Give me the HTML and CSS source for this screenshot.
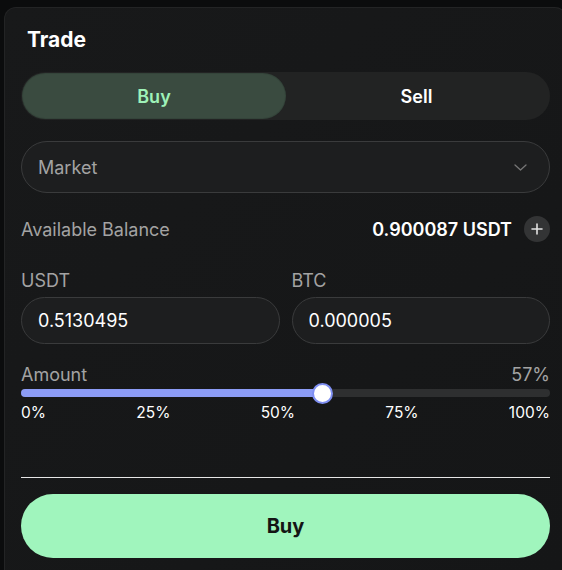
FILE: index.html
```html
<!DOCTYPE html>
<html lang="en">
<head>
  <meta charset="UTF-8">
  <title>Trade</title>
  <link rel="stylesheet" href="styles.css">
</head>
<body>
  <div class="card">
    <h2 class="title">Trade</h2>

    <div class="side-toggle">
      <button class="side active">Buy</button>
      <button class="side">Sell</button>
    </div>

    <div class="order-type">
      <span>Market</span>
      <svg class="chevron" width="13" height="7" viewBox="0 0 13 7"><path d="M1 1l5.5 5 5.5-5" fill="none" stroke="#767676" stroke-width="1.3" stroke-linecap="round" stroke-linejoin="round"/></svg>
    </div>

    <div class="balance">
      <span class="muted">Available Balance</span>
      <div class="balance-right">
        <span class="balance-value">0.900087 USDT</span>
        <span class="plus">
          <svg width="12" height="12" viewBox="0 0 12 12"><path d="M6 1v10M1 6h10" stroke="#e2e2e2" stroke-width="1.6" stroke-linecap="round"/></svg>
        </span>
      </div>
    </div>

    <div class="fields">
      <label class="field">
        <span class="muted">USDT</span>
        <input type="text" value="0.5130495">
      </label>
      <label class="field">
        <span class="muted">BTC</span>
        <input type="text" value="0.000005">
      </label>
    </div>

    <div class="amount-head">
      <span class="muted">Amount</span>
      <span class="muted">57%</span>
    </div>
    <div class="track">
      <div class="fill" style="width: 57%"></div>
      <div class="thumb" style="left: 57%"></div>
    </div>
    <div class="marks">
      <span>0%</span>
      <span>25%</span>
      <span>50%</span>
      <span>75%</span>
      <span>100%</span>
    </div>

    <hr class="divider">

    <button class="submit">Buy</button>
  </div>
</body>
</html>
```

FILE: styles.css
```css
* {
  box-sizing: border-box;
}

html,
body {
  height: 570px;
  overflow: hidden;
}

body {
  margin: 0;
  background: #0b0c0d;
  font-family: Inter, "Noto Sans", sans-serif;
  color: #fff;
}

.card {
  margin: 7px 0 0 4px;
  width: 563px;
  height: 563px;
  padding: 20px 16px 16px;
  background: linear-gradient(135deg, #18191a, #151617);
  border: 1px solid #232425;
  border-bottom: 0;
  border-radius: 12px 12px 0 0;
}

.title {
  margin: 0;
  padding-left: 6px;
  font-size: 21px;
  line-height: 24px;
  font-weight: 700;
}

.side-toggle {
  margin-top: 20px;
  display: flex;
  height: 48px;
  padding: 2px;
  background: #222323;
  border-radius: 24px;
}

.side {
  flex: 1;
  border: 0;
  background: transparent;
  color: #fff;
  font-family: inherit;
  font-size: 18px;
  font-weight: 600;
  border-radius: 22px;
  padding: 0;
}

.side.active {
  flex: 0 0 262px;
  background: #3a4b40;
  color: #9ef2b8;
  box-shadow: 0 0 0 1px #34443a;
}

.order-type {
  margin-top: 21px;
  height: 52px;
  display: flex;
  align-items: center;
  justify-content: space-between;
  padding: 0 22px 0 16px;
  border: 1px solid #3a3b3c;
  border-radius: 26px;
  background: #1d1e1f;
  color: #a3a3a3;
  font-size: 18px;
}

.muted {
  color: #a3a3a3;
}

.balance {
  margin-top: 23px;
  height: 26px;
  display: flex;
  align-items: center;
  justify-content: space-between;
  font-size: 18px;
}

.balance-right {
  display: flex;
  align-items: center;
  gap: 12px;
}

.balance-value {
  font-weight: 600;
}

.plus {
  width: 26px;
  height: 26px;
  border-radius: 50%;
  background: #333435;
  display: flex;
  align-items: center;
  justify-content: center;
}

.fields {
  margin-top: 29px;
  display: flex;
  gap: 12px;
}

.field {
  flex: 1;
  display: flex;
  flex-direction: column;
  gap: 6px;
  font-size: 18px;
  line-height: 20px;
}

.field input {
  height: 47px;
  width: 100%;
  border: 1px solid #3a3b3c;
  border-radius: 24px;
  background: #1d1e1f;
  color: #fff;
  font-family: inherit;
  font-size: 18px;
  padding: 0 16px;
  outline: 0;
}

.amount-head {
  margin-top: 21px;
  display: flex;
  justify-content: space-between;
  font-size: 18px;
  line-height: 20px;
}

.track {
  position: relative;
  margin-top: 4px;
  height: 8px;
  border-radius: 4px;
  background: #2e2f30;
}

.fill {
  height: 100%;
  border-radius: 4px;
  background: #8c9cf6;
}

.thumb {
  position: absolute;
  top: 50%;
  width: 21px;
  height: 21px;
  margin: -10.5px 0 0 -10.5px;
  border-radius: 50%;
  background: #fff;
  border: 2px solid #7f8ff2;
}

.marks {
  margin-top: 7px;
  display: flex;
  justify-content: space-between;
  font-size: 15.5px;
  line-height: 18px;
}

.divider {
  margin: 55px 0 0;
  border: 0;
  height: 1px;
  background: #e6e6e6;
}

.submit {
  margin-top: 16px;
  width: 100%;
  height: 64px;
  border: 0;
  border-radius: 32px;
  background: #a0f5bd;
  color: #141414;
  font-family: inherit;
  font-size: 20px;
  font-weight: 700;
}
```
